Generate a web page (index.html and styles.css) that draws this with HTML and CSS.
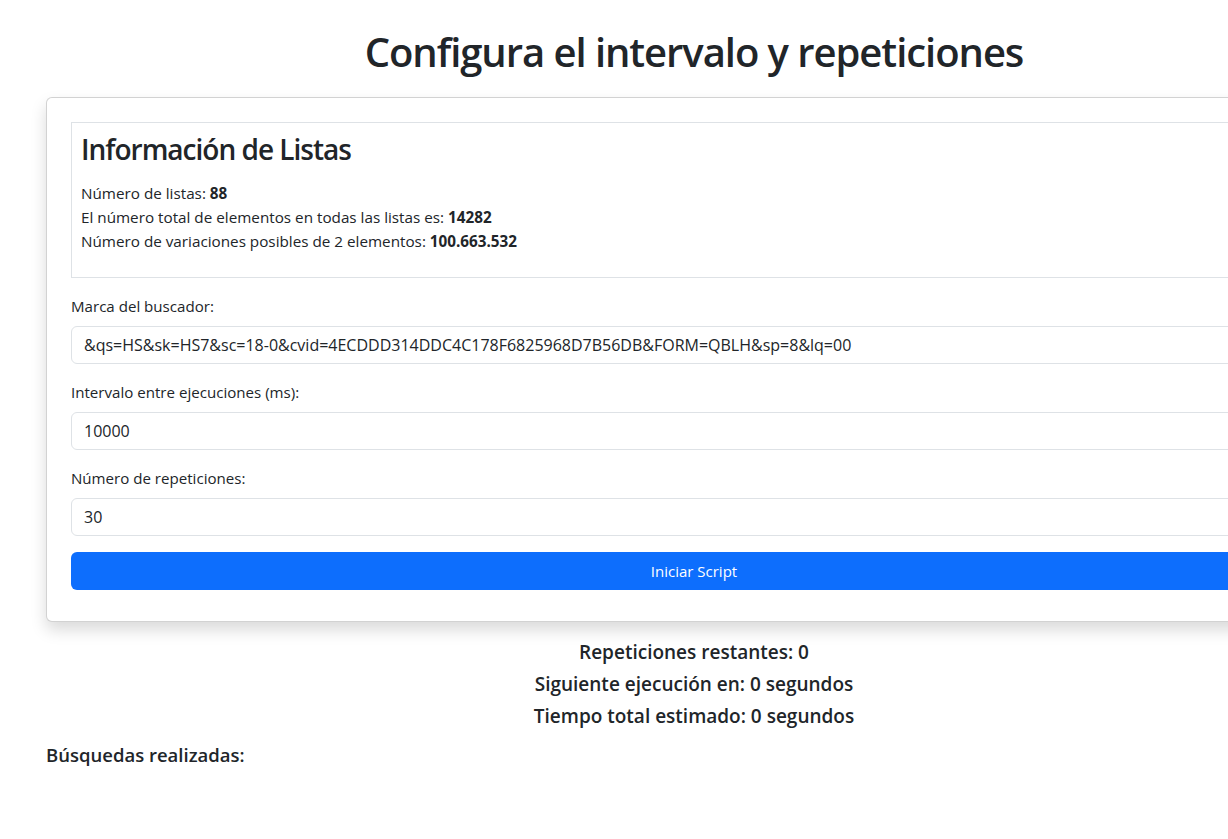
FILE: index.html
```html
<!DOCTYPE html>
<html lang="es">
<head>
<meta charset="utf-8">
<title>Configura el intervalo y repeticiones</title>
<link rel="stylesheet" href="styles.css">
</head>
<body>
<div class="page">
  <div class="container">
    <h1 class="title">Configura el intervalo y repeticiones</h1>
    <div class="card">
      <div class="info">
        <h3 class="info-title">Información de Listas</h3>
        <p class="info-text">
          Número de listas: <strong>88</strong><br>
          El número total de elementos en todas las listas es: <strong>14282</strong><br>
          Número de variaciones posibles de 2 elementos: <strong>100.663.532</strong>
        </p>
      </div>
      <div class="field">
        <label class="label">Marca del buscador:</label>
        <div class="input">&amp;qs=HS&amp;sk=HS7&amp;sc=18-0&amp;cvid=4ECDDD314DDC4C178F6825968D7B56DB&amp;FORM=QBLH&amp;sp=8&amp;lq=00</div>
      </div>
      <div class="field">
        <label class="label">Intervalo entre ejecuciones (ms):</label>
        <div class="input">10000</div>
      </div>
      <div class="field">
        <label class="label">Número de repeticiones:</label>
        <div class="input">30</div>
      </div>
      <div class="btn">Iniciar Script</div>
    </div>
    <div class="status">
      <h5 class="status-line">Repeticiones restantes: 0</h5>
      <h5 class="status-line">Siguiente ejecución en: 0 segundos</h5>
      <h5 class="status-line">Tiempo total estimado: 0 segundos</h5>
    </div>
    <h5 class="searches">Búsquedas realizadas:</h5>
  </div>
</div>
</body>
</html>
```

FILE: styles.css
```css
html, body {
  margin: 0;
  padding: 0;
  overflow: hidden;
  background: #fff;
}
body {
  font-family: "Open Sans", "Noto Sans", sans-serif;
  font-size: 16px;
  line-height: 1.5;
  color: #212529;
}
.page {
  width: 1388px;
}
.container {
  width: 1320px;
  margin: 0 auto;
  padding: 0 12px;
  box-sizing: border-box;
}
.title {
  margin: 28px 0 21px;
  font-size: 40px;
  font-weight: 600;
  line-height: 48px;
  text-align: center;
  letter-spacing: -1.05px;
}
.card {
  border: 1px solid rgba(0,0,0,0.175);
  border-radius: 6px;
  box-shadow: 0 8px 16px rgba(0,0,0,0.15);
  padding: 24px 24px 31px;
  background: #fff;
}
.info {
  border: 1px solid #dee2e6;
  padding: 9px 9px 14px;
  margin-bottom: 16px;
}
.info-title {
  margin: 0 0 15px;
  font-size: 28px;
  font-weight: 600;
  line-height: 34px;
  letter-spacing: -1px;
}
.info-text {
  margin: 0 0 10px;
  font-size: 15.25px;
  line-height: 24px;
}
.field {
  margin-bottom: 16px;
  display: flex;
  flex-direction: column;
  gap: 8px;
}
.label {
  font-size: 15.1px;
  line-height: 24px;
}
.input {
  height: 38px;
  box-sizing: border-box;
  border: 1px solid #dee2e6;
  border-radius: 6px;
  padding: 0 12px;
  font-size: 16px;
  line-height: 36px;
  white-space: nowrap;
  overflow: hidden;
}
.btn {
  height: 38px;
  border-radius: 6px;
  background: #0d6efd;
  color: #fff;
  font-size: 15px;
  line-height: 38px;
  text-align: center;
}
.status {
  margin-top: 18px;
  text-align: center;
}
.status-line, .searches {
  margin: 0 0 8px;
  font-size: 19px;
  font-weight: 600;
  line-height: 24px;
}
.searches {
  margin-top: 15px;
  text-align: left;
  font-size: 18.5px;
}
```
